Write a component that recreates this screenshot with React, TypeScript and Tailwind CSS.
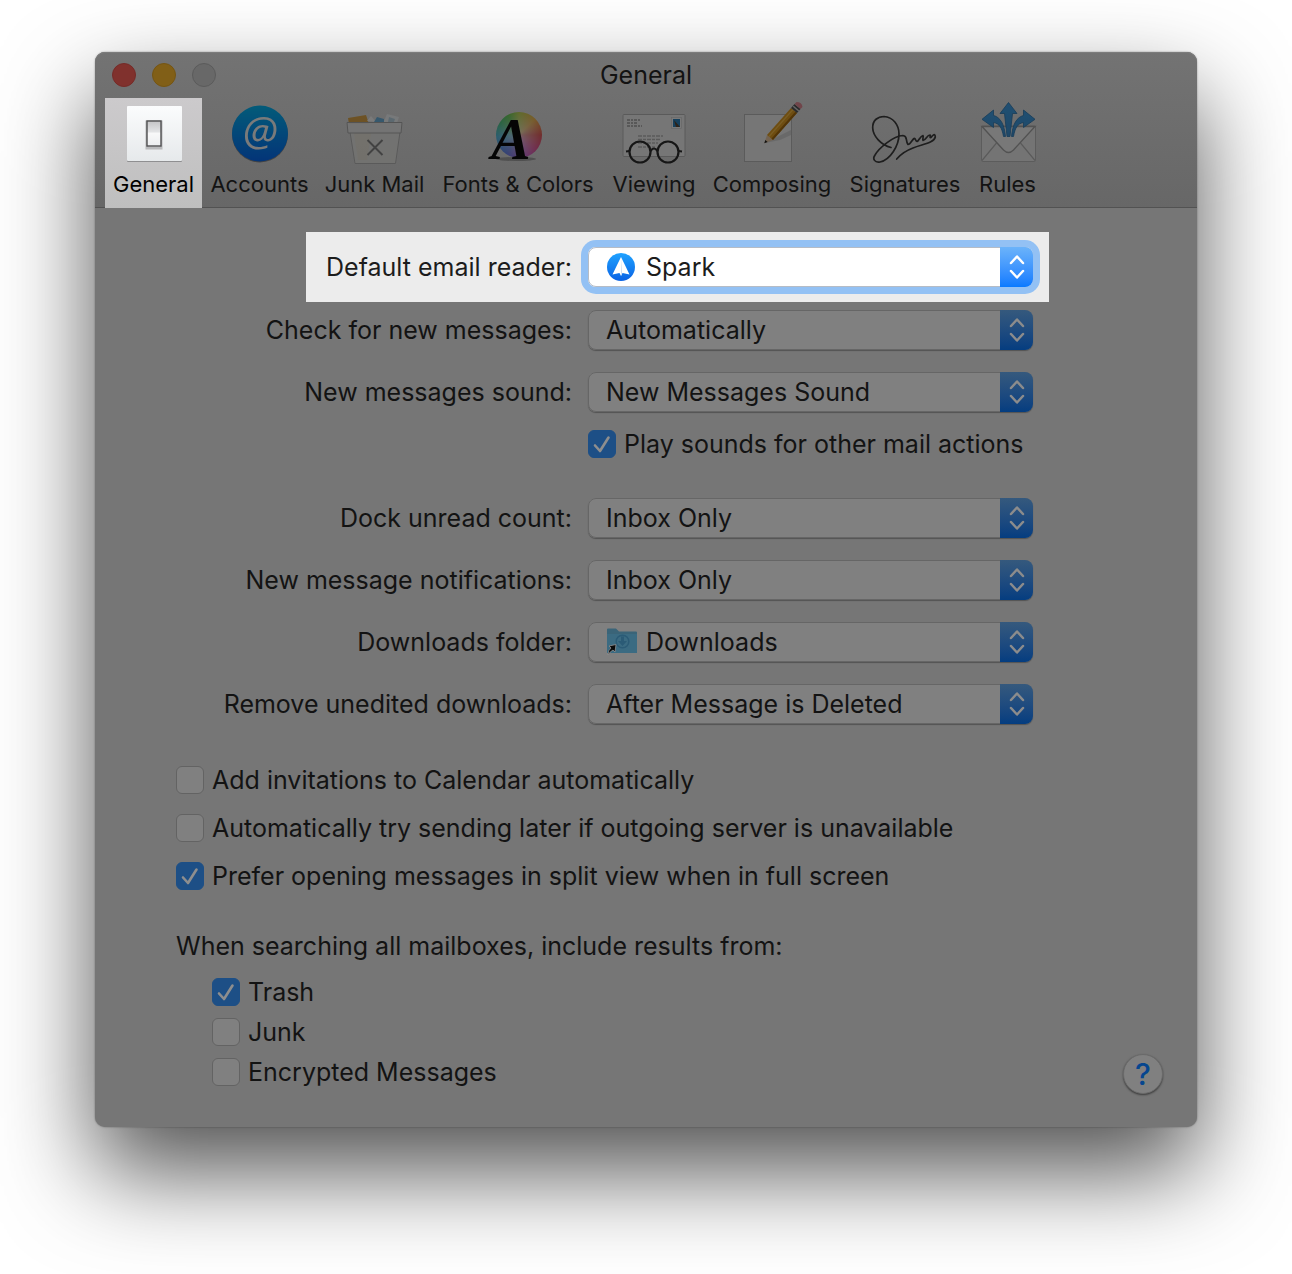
import type { ReactNode } from "react";

function GeneralIcon() {
  return (
    <svg viewBox="0 0 64 64" className="size-16" aria-hidden="true">
      <defs>
        <linearGradient id="plate" x1="0" y1="0" x2="0" y2="1">
          <stop offset="0" stopColor="#fbfcfd" />
          <stop offset="1" stopColor="#e6e9eb" />
        </linearGradient>
        <linearGradient id="rocker" x1="0" y1="0" x2="0" y2="1">
          <stop offset="0" stopColor="#c4c4c6" />
          <stop offset="0.42" stopColor="#e2e3e5" />
          <stop offset="0.5" stopColor="#f8f8f9" />
          <stop offset="1" stopColor="#eceef0" />
        </linearGradient>
      </defs>
      <rect x="5" y="5" width="55" height="55" rx="1" fill="#8f8f91" />
      <rect x="5" y="4" width="55" height="55" rx="1" fill="url(#plate)" />
      <rect x="25" y="20" width="14" height="26" fill="none" stroke="#b9babc" strokeWidth="3" />
      <rect x="25" y="19" width="14" height="25" fill="url(#rocker)" stroke="#505052" strokeWidth="1.4" />
    </svg>
  );
}

function AccountsIcon() {
  return (
    <svg viewBox="0 0 64 64" className="size-16 brightness-50" aria-hidden="true">
      <defs>
        <linearGradient id="at" x1="0" y1="0" x2="0" y2="1">
          <stop offset="0" stopColor="#06b6f2" />
          <stop offset="1" stopColor="#0668f0" />
        </linearGradient>
      </defs>
      <circle cx="32" cy="32.5" r="28" fill="#555" opacity="0.6" />
      <circle cx="32" cy="31.5" r="28" fill="url(#at)" />
      <text x="32" y="44" textAnchor="middle" fontSize="41" fontStyle="italic" fill="#f4f4f4" fontFamily="'Open Sans', sans-serif">
        @
      </text>
    </svg>
  );
}

function JunkIcon() {
  return (
    <svg viewBox="0 0 64 64" className="size-16 brightness-50" aria-hidden="true">
      <path d="M5 16 L23 13 L26 22 H6 Z" fill="#d9a54a" />
      <path d="M24 19 L28 14 L33 20 Z" fill="#f4f4f4" />
      <path d="M31 20 L34 15 L41 17 V21 Z" fill="#6cb0da" />
      <path d="M41 19 L44 12 L56 15 L54 21 H41 Z" fill="#eef1f4" />
      <path d="M46 15 L52 17 L51 20 H45 Z" fill="#b9d2e0" />
      <path d="M7 30 H57 L52.5 61.5 H12 Z" fill="#e8e8e4" fillOpacity="0.75" stroke="#b4b4b4" />
      <path d="M11 31 H28 L24 58 H15 Z" fill="#e8dcc0" fillOpacity="0.3" />
      <path d="M4 20.5 H59 L58 31 H5 Z" fill="#e9e9e9" fillOpacity="0.9" stroke="#a9a9a9" />
      <path d="M24.5 38 L39.5 53 M39.5 38 L24.5 53" stroke="#858585" strokeWidth="2" />
    </svg>
  );
}

function FontsIcon() {
  return (
    <div className="relative size-16 brightness-50" aria-hidden="true">
      <div className="absolute top-[10px] left-[10px] size-[46px] rounded-full bg-[radial-gradient(circle,rgba(235,235,235,0.7)_0%,rgba(235,235,235,0.1)_70%),conic-gradient(#b9d246,#f0b040_45deg,#e04848_90deg,#e04890_130deg,#c45fd8_165deg,#5a78e8_215deg,#42b4dc_265deg,#40c080_300deg,#58c84a_330deg,#b9d246)]" />
      <svg viewBox="0 0 64 64" className="absolute inset-0 size-16 overflow-visible">
        <ellipse cx="30" cy="57" rx="20" ry="2" fill="#222" opacity="0.3" />
        <text x="25" y="57" textAnchor="middle" fontSize="59" fontWeight="700" fontStyle="italic" fill="#0a0a0a" fontFamily="'Liberation Serif', serif">
          A
        </text>
      </svg>
    </div>
  );
}

function ViewingIcon() {
  return (
    <svg viewBox="0 0 64 64" className="size-16 brightness-50" aria-hidden="true">
      <rect x="1" y="12.5" width="62" height="42" rx="1" fill="#ececec" stroke="#b4b4b4" />
      <path d="M5 18 h14 M5 21 h11 M5 24 h15" stroke="#9a9a9a" strokeWidth="1.3" strokeDasharray="3 1 2 1" />
      <path d="M16 34 h25 M16 37.5 h22 M16 41 h20 M16 45 h17" stroke="#b2b2b2" strokeWidth="1.5" strokeDasharray="4 1 3 1" />
      <rect x="49.5" y="15.5" width="10" height="11" fill="#f2f2f2" stroke="#c8c8c8" strokeWidth="0.6" />
      <rect x="51" y="17" width="7" height="8" fill="#2c7fb8" />
      <path d="M52 18 L58 25 H54 Z" fill="#5b4632" />
      <g fill="none" stroke="#2c2c2c" strokeWidth="2.2">
        <circle cx="18" cy="50" r="10.5" />
        <circle cx="46" cy="50" r="10.5" />
        <path d="M28.5 49 Q32 44 35.5 49 M7.5 49 L4 49.5 M56.5 49 L60 49.5" />
      </g>
    </svg>
  );
}

function ComposingIcon() {
  return (
    <svg viewBox="0 0 64 64" className="size-16 overflow-visible brightness-50" aria-hidden="true">
      <rect x="4.5" y="12.5" width="47" height="47" fill="#ebebeb" stroke="#b6b6b6" />
      <path d="M25 41 L51 28 V33 L40 38 Z" fill="#c8c8c8" opacity="0.7" />
      <path d="M24.3 41.3 L27 33 L33 38 Z" fill="#e5c6a2" />
      <path d="M24.3 41.3 L25.3 38 L27.6 40 Z" fill="#222" />
      <path d="M27 33 L51 6 L57 11 L33 38 Z" fill="#dc9a22" />
      <path d="M31.5 36.500 L55.5 9.5 L57 11 L33 38 Z" fill="#a46a10" />
      <path d="M29 34.5 L53 7.5" stroke="#f2bb48" strokeWidth="1.2" />
      <path d="M51 6 L54.5 2 L60.5 7 L57 11 Z" fill="#555" />
      <path d="M53.2 4.2 L58.8 9" stroke="#d0d0d0" strokeWidth="1.4" />
      <path d="M54.5 2 L56.5 0 Q62 0 62.5 5 L60.5 7 Z" fill="#e08a94" />
    </svg>
  );
}

function SignaturesIcon() {
  return (
    <svg viewBox="0 0 64 64" className="size-16 overflow-visible brightness-50" aria-hidden="true">
      <path
        d="M18 45.5 C8 43 0 34 -0.3 26 C-0.5 18 5 14.5 11 14.5 C20 15 26 23 26 32 C26 44 17 58 7 60 C2 61 -1 57 2 53 C6 46 20 34 30 33.5 C35 34 32 38 35 42.5 C37 43 39 38 41 36.5 C43 36 42 39 44 39.5 C46 39 47 34 50 33.5 C51 34 49 38 50 38.5 C53 38 54 33 57 33 C58 33 56 36 58 35.5 C60 33 62 31 62.3 35 C61 41 50 42 40 46 C32 49 27 53 23.7 57"
        fill="none"
        stroke="#3b3b3b"
        strokeWidth="1.7"
        strokeLinecap="round"
        strokeLinejoin="round"
      />
    </svg>
  );
}

function RulesIcon() {
  return (
    <svg viewBox="0 0 64 64" className="size-16 brightness-50" aria-hidden="true">
      <defs>
        <linearGradient id="arrows" x1="0" y1="0" x2="0" y2="1">
          <stop offset="0" stopColor="#3f9fe4" />
          <stop offset="1" stopColor="#3d90d0" />
        </linearGradient>
      </defs>
      <rect x="5.5" y="24" width="54" height="35.5" rx="1" fill="#e8e8e8" stroke="#b8b8b8" />
      <path d="M6 58.5 L20.5 41 M59 58.5 L44.5 41" stroke="#b4b4b4" strokeWidth="1.2" />
      <path d="M6 24.5 L27.500 48 Q32.5 53 37.5 48 L59 24.5 Z" fill="#f0f0f0" stroke="#a4a4a4" strokeWidth="1.4" />
      <g fill="url(#arrows)" stroke="#2f77b0" strokeWidth="0.8">
        <path d="M32.500 0.5 L41 11.5 H36.5 L34 34.5 H31 L28.5 11.5 H24 Z" />
        <path d="M6 17.3 L17.5 8 V13.5 C24 15 28.500 22 29.5 34.5 H27.5 C26 26 23.500 21.5 17.5 20.5 V25.5 Z" />
        <path d="M59 17.3 L47.5 8 V13.5 C41 15 36.5 22 35.5 34.5 H37.5 C39 26 41.5 21.5 47.5 20.5 V25.5 Z" />
      </g>
    </svg>
  );
}

function SparkIcon() {
  return (
    <svg viewBox="0 0 28 28" className="size-7" aria-hidden="true">
      <defs>
        <linearGradient id="spark" x1="0" y1="0" x2="0" y2="1">
          <stop offset="0" stopColor="#1fa2ff" />
          <stop offset="1" stopColor="#0a62e4" />
        </linearGradient>
      </defs>
      <circle cx="14" cy="14" r="14" fill="url(#spark)" />
      <path d="M14 4 Q18 12 22.5 21.5 L15.5 20 L14 23 L12.5 20 L5.5 21.5 Q10 12 14 4 Z" fill="#fff" />
      <path d="M14 5 L15 20 L14 23 Z" fill="#c9daf0" />
    </svg>
  );
}

function FolderIcon() {
  return (
    <svg viewBox="0 0 30 28" className="h-7 w-[30px]" aria-hidden="true">
      <path d="M0 1.5 Q0 0.5 1 0.5 H9 L12 3.5 H29 Q30 3.5 30 4.5 V25 H0 Z" fill="#3a6478" />
      <path d="M0 6 H30 V25 H0 Z" fill="#3b6b82" />
      <circle cx="15.5" cy="13.5" r="6.3" fill="none" stroke="#2b5b76" strokeWidth="1.5" />
      <path d="M14 8.5 H17 V13 H20 L15.5 18 L11 13 H14 Z" fill="#2b5b76" />
      <path d="M1 27 Q1 22 4 20 L2 18 L9 16.5 L8 24 L6 22 Q3 23.5 1 27 Z" fill="#0a0a0a" stroke="#909090" strokeWidth="0.8" />
    </svg>
  );
}

const tabs: { label: string; width: string; icon: ReactNode }[] = [
  { label: "General", width: "w-[97px]", icon: <GeneralIcon /> },
  { label: "Accounts", width: "w-[115px]", icon: <AccountsIcon /> },
  { label: "Junk Mail", width: "w-[115px]", icon: <JunkIcon /> },
  { label: "Fonts & Colors", width: "w-[172px]", icon: <FontsIcon /> },
  { label: "Viewing", width: "w-[100px]", icon: <ViewingIcon /> },
  { label: "Composing", width: "w-[136px]", icon: <ComposingIcon /> },
  { label: "Signatures", width: "w-[130px]", icon: <SignaturesIcon /> },
  { label: "Rules", width: "w-[75px]", icon: <RulesIcon /> },
];

function Popup({ id, label, value, icon, active = false }: { id: string; label: string; value: string; icon?: ReactNode; active?: boolean }) {
  return (
    <div className={`ml-auto flex w-fit items-center gap-4 pr-4 pl-5 ${active ? "bg-[#ececec] py-[15px] text-[#1c1c1c]" : ""}`}>
      <label htmlFor={id} className="whitespace-nowrap">
        {label}
      </label>
      <div
        className={`relative h-10 w-[445px] rounded-lg ${
          active ? "bg-white shadow-[0_0_0_7px_#93c1f4]" : "bg-[#808080] shadow-[0_1px_1px_rgba(0,0,0,0.3)]"
        }`}
      >
        <select
          id={id}
          defaultValue={value}
          className={`size-full appearance-none rounded-lg border bg-transparent pr-9 outline-none ${icon ? "pl-[57px]" : "pl-[17px]"} ${
            active ? "border-[#b5bcc6]" : "border-[#666]"
          }`}
        >
          <option>{value}</option>
        </select>
        {icon && <span className="pointer-events-none absolute inset-y-0 left-[19px] flex items-center">{icon}</span>}
        <span
          className={`pointer-events-none absolute inset-y-0 right-0 flex w-[33px] items-center justify-center rounded-r-lg bg-linear-to-b ${
            active ? "from-[#6bb3fa] to-[#087aff] text-white" : "from-[#35597d] to-[#043d80] text-[#8c8c8c]"
          }`}
        >
          <svg viewBox="0 0 16 26" className="h-[26px] w-4" fill="none" stroke="currentColor" strokeWidth="2.5" strokeLinecap="round" strokeLinejoin="round" aria-hidden="true">
            <path d="M2 9 L8 2.500 L14 9 M2 17 L8 23.500 L14 17" />
          </svg>
        </span>
      </div>
    </div>
  );
}

function Check({ label, checked = false }: { label: string; checked?: boolean }) {
  return (
    <label className="flex h-7 w-fit items-center gap-2 whitespace-nowrap">
      <span className="relative size-7">
        <input
          type="checkbox"
          defaultChecked={checked}
          className="peer block size-7 appearance-none rounded-md border border-[#636363] bg-[#808080] checked:border-[#1d4f86] checked:bg-[#1d4f86]"
        />
        <svg viewBox="0 0 28 28" className="pointer-events-none absolute inset-0 hidden size-7 peer-checked:block" fill="none" stroke="#8e8e8e" strokeWidth="2.6" strokeLinecap="round" strokeLinejoin="round" aria-hidden="true">
          <path d="M7 15.5 L12 21 L20.5 7.5" />
        </svg>
      </span>
      {label}
    </label>
  );
}

export default function App() {
  return (
    <div className="min-h-screen bg-white px-[95px] pt-[52px] pb-[147px] font-['Inter',sans-serif] text-[25px] leading-8 text-[#131313]">
      <main className="rounded-[10px] bg-[#767676] shadow-[0_45px_95px_rgba(0,0,0,0.68),0_0_2px_rgba(0,0,0,0.4)]">
        <header className="rounded-t-[10px] bg-linear-to-b from-[#737373] to-[#676767] shadow-[inset_0_-1px_0_#525252,inset_0_1px_0_#7c7c7c]">
          <div className="grid h-[46px] grid-cols-[1fr_auto_1fr] items-center px-[17px]">
            <div className="flex gap-4">
              <button aria-label="Close" className="size-6 rounded-full border border-[#752b28] bg-[#80312d]" />
              <button aria-label="Minimize" className="size-6 rounded-full border border-[#755513] bg-[#815f17]" />
              <button aria-label="Zoom" className="size-6 rounded-full border border-[#5b5b5b] bg-[#686868]" />
            </div>
            <h1>General</h1>
          </div>
          <nav className="flex pl-[10px] text-[22px]">
            {tabs.map((tab, i) => (
              <button
                key={tab.label}
                className={`flex h-[110px] shrink-0 flex-col items-center pt-1 whitespace-nowrap ${tab.width} ${
                  i === 0 ? "bg-linear-to-b from-[#cccacc] to-[#bfbfbf] text-black" : ""
                }`}
              >
                {tab.icon}
                <span className="mt-1 leading-7">{tab.label}</span>
              </button>
            ))}
          </nav>
        </header>

        <form className="relative pt-6 pb-[41px]">
          <div className="flex flex-col pr-[148px]">
            <Popup id="reader" label="Default email reader:" value="Spark" icon={<SparkIcon />} active />
            <div className="mt-2 flex flex-col gap-[22px]">
              <Popup id="check" label="Check for new messages:" value="Automatically" />
              <Popup id="sound" label="New messages sound:" value="New Messages Sound" />
            </div>
            <div className="mt-[18px] ml-auto w-[461px]">
              <Check label="Play sounds for other mail actions" checked />
            </div>
            <div className="mt-10 flex flex-col gap-[22px]">
              <Popup id="dock" label="Dock unread count:" value="Inbox Only" />
              <Popup id="notify" label="New message notifications:" value="Inbox Only" />
              <Popup id="folder" label="Downloads folder:" value="Downloads" icon={<FolderIcon />} />
              <Popup id="remove" label="Remove unedited downloads:" value="After Message is Deleted" />
            </div>
          </div>

          <div className="mt-[42px] flex flex-col gap-5 pl-[81px]">
            <Check label="Add invitations to Calendar automatically" />
            <Check label="Automatically try sending later if outgoing server is unavailable" />
            <Check label="Prefer opening messages in split view when in full screen" checked />
          </div>

          <fieldset className="mt-10 pl-[81px]">
            <legend>When searching all mailboxes, include results from:</legend>
            <div className="mt-4 flex flex-col gap-3 pl-9">
              <Check label="Trash" checked />
              <Check label="Junk" />
              <Check label="Encrypted Messages" />
            </div>
          </fieldset>

          <button
            type="button"
            aria-label="Help"
            className="absolute right-[34px] bottom-[33px] flex size-10 items-center justify-center rounded-full border border-[#6a6a6a] bg-[#808080] text-[30px] font-medium text-[#06468f] shadow-[0_1px_2px_rgba(0,0,0,0.5)]"
          >
            ?
          </button>
        </form>
      </main>
    </div>
  );
}
